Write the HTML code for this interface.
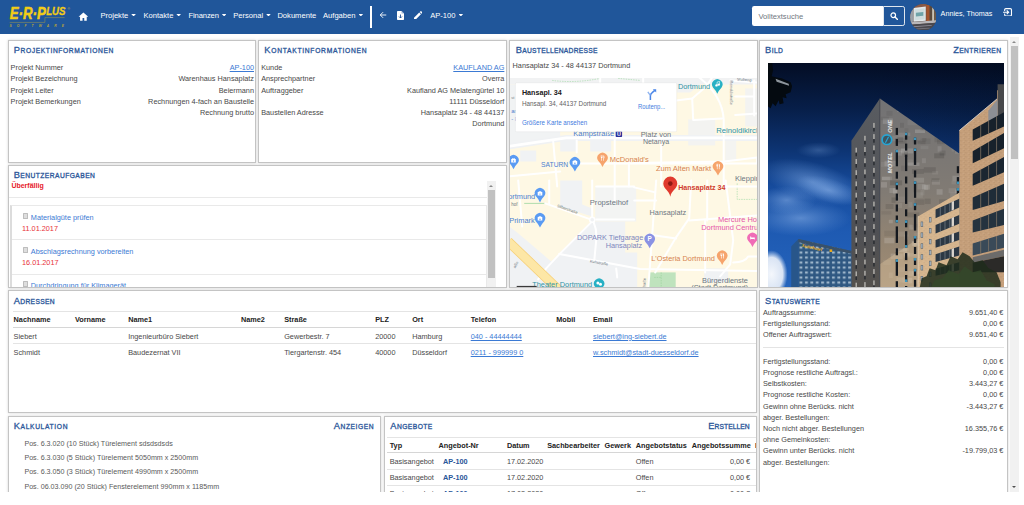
<!DOCTYPE html>
<html lang="de"><head><meta charset="utf-8"><title>ERPlus</title>
<style>
html,body{margin:0;padding:0}
body{width:1024px;height:505px;overflow:hidden;background:#fff;position:relative;font-family:"Liberation Sans",sans-serif;font-size:7.3px;color:#484848;line-height:11.2px}
*{box-sizing:border-box}
a{color:#3b7ad4;text-decoration:underline}
#nav{position:absolute;left:0;top:0;width:1024px;height:33.7px;background:#20569a}
#nav .t{position:absolute;top:11.300px;color:#fff;font-size:7.6px;line-height:10px;white-space:nowrap}
.car{display:inline-block;width:4.600px;height:2.500px;background:#fff;clip-path:polygon(0 0,100% 0,50% 100%);vertical-align:1.900px;margin-left:3px}
.p{position:absolute;background:#fff;border:1px solid #c4c4c4;box-shadow:0 0 2.5px rgba(0,0,0,.17);overflow:hidden}
.h{position:absolute;left:4.700px;top:2.600px;font-size:6.700px;line-height:13px;text-transform:uppercase;color:#2a5699;letter-spacing:.6px;white-space:nowrap;-webkit-text-stroke:.3px #2a5699}
.h i{font-style:normal;font-size:9.300px}
.hr{left:auto;right:4.600px}
.r{position:absolute;left:1.6px;right:1px;margin-top:-.9px;height:11.2px;white-space:nowrap}
.r b{font-weight:normal;position:absolute;right:0;top:0}

.cb{position:absolute;left:13.600px;margin-top:-.3px;width:5.600px;height:5.600px;border:.6px solid #bdbdbd;background:#dedede;border-radius:.6px}
.ti{position:absolute;left:21.800px;height:11px;line-height:11px;white-space:nowrap}
.ti a{text-decoration:none;color:#3b7ad4}
.dt{position:absolute;left:13px;height:11px;line-height:11px;color:#e8323a;white-space:nowrap}
.sep{position:absolute;left:0;height:.6px;background:#e9e9e9}

.c{position:absolute;white-space:nowrap;height:11px;line-height:11px}
.th{font-weight:bold;color:#222}
.ln{position:absolute;height:.6px;background:#e4e4e4}
.w{position:absolute}
</style></head><body>
<div id="nav">
<svg style="position:absolute;left:0;top:0" width="76" height="34" viewBox="0 0 76 34"><g font-family="Liberation Sans,sans-serif" font-weight="bold" font-style="italic" fill="#f3cd16"><text x="9.800" y="18.9" font-size="16.6" textLength="36" lengthAdjust="spacingAndGlyphs" stroke="#f3cd16" stroke-width=".55">E·R·P</text><text x="46.2" y="14.5" font-size="10.5" textLength="19.2" lengthAdjust="spacingAndGlyphs" stroke="#f3cd16" stroke-width=".3">LUS</text><text x="67.6" y="9.6" font-size="3.4" font-style="normal" font-weight="normal" fill="#c8b13a">®</text><text x="9.4" y="26.9" font-size="3.3" fill="#b9a437" textLength="54.6" lengthAdjust="spacing">SOFTWARE</text></g><path d="M9.7 22.4H44.9V17.6H64.6" stroke="#b5a23c" stroke-width=".45" fill="none"/></svg>
<svg style="position:absolute;left:77.6px;top:11.8px" width="10.8" height="9.2" viewBox="0 0 24 22"><path d="M12 1 L0.5 11.5 H4 V21 H10 V14.5 H14 V21 H20 V11.5 H23.5 Z" fill="#fff"/></svg>
<span class="t" style="left:100.4px">Projekte<span class="car"></span></span>
<span class="t" style="left:143.4px">Kontakte<span class="car"></span></span>
<span class="t" style="left:188.4px;letter-spacing:-.1px">Finanzen<span class="car"></span></span>
<span class="t" style="left:233.2px">Personal<span class="car"></span></span>
<span class="t" style="left:277.4px">Dokumente</span>
<span class="t" style="left:323px">Aufgaben<span class="car"></span></span>
<div style="position:absolute;left:370.3px;top:6px;width:1.3px;height:22px;background:#fff"></div>
<svg style="position:absolute;left:379.4px;top:11.4px" width="8" height="8" viewBox="0 0 16 16"><path d="M14.500 8H2.500M8.200 2.300L2.500 8L8.200 13.700" stroke="#fff" stroke-width="1.800" fill="none"/></svg>
<svg style="position:absolute;left:397px;top:10.6px" width="7" height="9" viewBox="0 0 14 18"><path d="M0 1.5A1.5 1.5 0 0 1 1.500 0H9l5 5v11.500A1.500 1.500 0 0 1 12.500 18h-11A1.500 1.500 0 0 1 0 16.500z" fill="#fff"/><path d="M7 7v7M4 11l3 3 3-3" stroke="#20569a" stroke-width="1.800" fill="none"/><path d="M9 0v5h5z" fill="#9db6d6"/></svg>
<svg style="position:absolute;left:413.600px;top:10.800px" width="8.500" height="8.500" viewBox="0 0 16 16"><path d="M0 12.700V16h3.300l9.800-9.800-3.300-3.300zM15.700 3.600a.9.900 0 0 0 0-1.300L13.700.3a.9.900 0 0 0-1.300 0l-1.600 1.600 3.300 3.300z" fill="#fff"/></svg>
<span class="t" style="left:430.200px">AP-100<span class="car"></span></span>
<div style="position:absolute;left:752.400px;top:6px;width:131px;height:20px;background:#fff;border-radius:2.200px 0 0 2.200px"></div>
<span style="position:absolute;left:758.400px;top:11.800px;font-size:7.600px;line-height:10px;color:#6f7780">Volltextsuche</span>
<div style="position:absolute;left:883.400px;top:6px;width:21.400px;height:20px;border:.6px solid #dfe6ee;border-radius:0 2.200px 2.200px 0"></div>
<svg style="position:absolute;left:889.600px;top:11.600px" width="8" height="8" viewBox="0 0 16 16"><circle cx="6.500" cy="6.500" r="4.600" stroke="#fff" stroke-width="2.400" fill="none"/><path d="M10 10l5 5" stroke="#fff" stroke-width="2.800" stroke-linecap="round"/></svg>
<svg style="position:absolute;left:909.700px;top:3.700px" width="26.600" height="26.600" viewBox="0 0 27 27"><defs><clipPath id="av"><circle cx="13.500" cy="13.500" r="13.400"/></clipPath></defs><g clip-path="url(#av)"><rect width="27" height="27" fill="#5b4a44"/><rect x="0" y="0" width="17" height="5" fill="#8a5a48"/><path d="M0 6L3 5V18L0 19Z" fill="#9aa0a8"/><path d="M3.500 4L16 2.500V17L3.500 18Z" fill="#e4e9eb"/><path d="M4.500 5.500L14.800 4.200V15.500L4.500 16.400Z" fill="#cfdcde"/><path d="M6 9L13.500 8.200V12L6 12.600Z" fill="#6fa3a8"/><rect x="16.500" y="1" width="3.500" height="18" fill="#a5562f"/><rect x="20" y="1" width="2.500" height="18" fill="#5a4a3c"/><rect x="22.500" y="3" width="2" height="15" fill="#c9c3b4"/><rect x="24.500" y="1" width="3" height="18" fill="#6b5a4a"/><path d="M0 18.500L27 16.500V19L0 21Z" fill="#b9b6b8"/><path d="M0 21L27 19V27H0Z" fill="#4a484e"/><path d="M3 22.600L22 21.200V22.200L3 23.600Z" fill="#8f8c96"/><path d="M6 25L20 24V24.800L6 25.800Z" fill="#77757e"/></g></svg>
<span class="t" style="left:940.600px;top:8.900px;font-size:7.200px">Annies, Thomas</span>
<svg style="position:absolute;left:1003.400px;top:7.900px" width="9.200" height="8.600" viewBox="0 0 18 17"><rect x="3.200" y="1.300" width="13.500" height="14.400" rx="2.400" stroke="#fff" stroke-width="2.200" fill="none"/><path d="M0 8.500h10.500" stroke="#20569a" stroke-width="5"/><path d="M0 8.500h10.500M7.300 4.700l3.800 3.800-3.800 3.800" stroke="#fff" stroke-width="2.200" fill="none"/></svg>
</div>
<div class="p" id="p1" style="left:8px;top:40px;width:248px;height:123px"><div class="w" style="left:0.00px;top:0.00px;width:246.00px;height:121.00px"><div class="h" style="letter-spacing:0.60px"><i>P</i>rojektinformationen</div><div class="r" style="top:22.0px">Projekt Nummer<b><a>AP-100</a></b></div><div class="r" style="top:33.2px">Projekt Bezeichnung<b>Warenhaus Hansaplatz</b></div><div class="r" style="top:44.4px">Projekt Leiter<b>Beiermann</b></div><div class="r" style="top:55.6px">Projekt Bemerkungen<b>Rechnungen 4-fach an Baustelle</b></div><div class="r" style="top:66.8px"><b>Rechnung brutto</b></div></div></div>
<div class="p" id="p2" style="left:258px;top:40px;width:249px;height:123px"><div class="w" style="left:0.59px;top:0.00px;width:245.80px;height:121.00px"><div class="h" style="letter-spacing:0.73px"><i>K</i>ontaktinformationen</div><div class="r" style="top:22.0px">Kunde<b><a>KAUFLAND AG</a></b></div><div class="r" style="top:33.2px">Ansprechpartner<b>Overra</b></div><div class="r" style="top:44.4px">Auftraggeber<b>Kaufland AG Melatengürtel 10</b></div><div class="r" style="top:55.6px"><b>11111 Düsseldorf</b></div><div class="r" style="top:66.8px">Baustellen Adresse<b>Hansaplatz 34 - 48 44137</b></div><div class="r" style="top:78.0px"><b>Dortmund</b></div></div></div>
<div class="p" id="p3" style="left:509px;top:40px;width:249px;height:248px"><div class="w" style="left:1.00px;top:0.00px;width:245.59px;height:246.59px"><div class="h" style="letter-spacing:0.29px"><i>B</i>austellenadresse</div><div class="r" style="top:19.600px;left:1.600px">Hansaplatz 34 - 48 44137 Dortmund</div><svg id="map" style="position:absolute;left:-1px;top:36.600px" width="247.200" height="211" viewBox="509.800 77.600 247.200 211" font-family="Liberation Sans,sans-serif" font-size="6.5">
<rect x="508" y="77" width="250" height="213" fill="#fef8e4"/>
<path d="M508 77H757V84H700L690 92H677V84H508Z" fill="#f1f2f3"/>
<path d="M508 84H560V140L508 147Z" fill="#f1f3f4"/>
<path d="M509 226L517 232L551 261L592 221H625V252H637V289H509Z" fill="#f0f2f4"/>
<path d="M595 186H636V221H595Z" fill="#f3f4f3"/>
<path d="M560 180H582V204L592 208V216L560 206Z" fill="#f0f2f4"/>
<path d="M688 119H715V145H688Z" fill="#f3f3f1"/>
<path d="M745 88H757V126H745Z" fill="#f3f3f1"/>
<path d="M725 140H736V160H725Z" fill="#f4f4f1"/>
<path d="M560 140H576V151H560ZM590 140H611V151H590ZM520 150H536V161H520Z" fill="#f0f2f4"/>
<path d="M704 268H728V282H704Z" fill="#f0f2f4"/>

<path d="M508 146L566 137.500H757" stroke="#f0f2f4" stroke-width="6" fill="none"/>
<rect x="648.800" y="272" width="26.700" height="17" fill="#bfe3bd"/>
<path d="M661 272V289M654 277H661" stroke="#8fcf92" stroke-width=".5" stroke-dasharray="1.500 1" fill="none"/>
<path d="M737 183V199H757" stroke="#9ad6a0" stroke-width=".6" stroke-dasharray="1.500 1" fill="none"/>
<path d="M552 80Q575 83 600 78M618 78L640 80" stroke="#9ad6a0" stroke-width=".6" stroke-dasharray="1.500 1" fill="none"/>
<path d="M524 203H545" stroke="#9ad6a0" stroke-width=".8" fill="none"/>
<g stroke="#fff" stroke-width="2" fill="none" stroke-linecap="round" stroke-linejoin="round">
<path d="M508 146L566 137.500H757" stroke-width="2.600"/>
<path d="M553 141L557 186"/><path d="M576.500 140V152"/><path d="M580 163H757L757 158"/>
<path d="M634 162.500L724 161L757 157"/>
<path d="M508 176L560 171"/><path d="M614.500 136V200"/><path d="M628.700 160V186"/><path d="M661 140V186"/>
<path d="M676 100L692 98L706 86L712 77"/><path d="M692 98L693 119.500L722 118"/>
<path d="M699 77Q722 95 723.500 119V186"/>
<path d="M730 80L757 82"/><path d="M754 80V115"/><path d="M735 96H754"/><path d="M735 114.500L757 113"/>
<path d="M600 78V84M643 78V84"/>
<path d="M545 203L589 218.500"/><path d="M591 222L560 253L546 268L538 279"/><path d="M593.500 222Q597 230 596 240L594 261"/>
<path d="M559 253.500L640 268.500L757 270.500"/><path d="M549 180V203"/><path d="M518 180L522 226"/>
<path d="M592 180V216"/><path d="M596 219H634"/><path d="M616 268L617 277"/>
<path d="M596 186H634"/>
<path d="M656 180L648 289"/><path d="M691 180L689 218L675.500 237.500L655 272"/>
<path d="M689 220L757 215"/><path d="M705 220V272"/><path d="M707 180V220"/>
<path d="M725.500 180L733 240L730 264L720 276"/><path d="M648 234L676 238"/>
<path d="M634 187L655 192"/><path d="M724 186H757"/><path d="M733 262Q745 262 748 256H757"/>
<path d="M634 200H656"/>
</g>
<circle cx="592" cy="219.300" r="3.200" fill="#fff"/><circle cx="592" cy="219.300" r="1.800" fill="#f0f2f4"/>
<path d="M508 241L558 289" stroke="#f6cf77" stroke-width="9.500" fill="none"/>
<path d="M508 241L558 289" stroke="#fde7a6" stroke-width="8" fill="none"/>
<g fill="#6d7782">
<text x="640.500" y="136.600" textLength="30.5" lengthAdjust="spacingAndGlyphs">Platz von</text><text x="642.700" y="143.600" textLength="26.2" lengthAdjust="spacingAndGlyphs">Netanya</text>
<text x="589.600" y="204.600" font-size="6.800" textLength="38.4" lengthAdjust="spacingAndGlyphs">Propsteihof</text>
<text x="649.400" y="214.400" font-size="6.800" textLength="36.600" lengthAdjust="spacingAndGlyphs">Hansaplatz</text>
<text x="701.800" y="282.400" font-size="6.800" textLength="46.0" lengthAdjust="spacingAndGlyphs">Bürgerdienste</text><text x="691" y="290" font-size="6.800" textLength="57.0" lengthAdjust="spacingAndGlyphs">(Stadt Dortmund)</text>
<text x="734.700" y="180.600" font-size="6.800" textLength="25.0" lengthAdjust="spacingAndGlyphs">Kleppin</text>
<text font-size="4" transform="translate(556.500 206.500) rotate(19)">Silberstraße</text>
<text font-size="4" transform="translate(589.500 262) rotate(10)">Kuhstraße</text>
<text font-size="4" transform="translate(736.500 80) rotate(4)">Stubeng</text>
<text font-size="3.800" transform="translate(729.500 80) rotate(90)">Reinoldistraße</text>
<text font-size="4" transform="translate(645 289) rotate(-86)">straße</text>
<text font-size="4" transform="translate(515 268) rotate(-60)">aße</text>
<text font-size="4" x="511" y="99">st</text><text font-size="4.500" x="511" y="205.500">hof</text>
</g>
<g fill="#2f93a5"><text x="677.800" y="88.300" font-size="7.300" textLength="32.2" lengthAdjust="spacingAndGlyphs">Dortmund</text><text x="716" y="132.400" font-size="7.100" textLength="44.0" lengthAdjust="spacingAndGlyphs">Reinoldikirch</text><text x="532" y="287" font-size="7.200" textLength="60.0" lengthAdjust="spacingAndGlyphs">Theater Dortmund</text></g>
<g fill="#4c7fd0"><text x="573" y="135.500" font-size="6.800" textLength="41.0" lengthAdjust="spacingAndGlyphs">Kampstraße</text><text x="540.900" y="166.500" font-size="6.800" textLength="27.1" lengthAdjust="spacingAndGlyphs">SATURN</text><text x="508" y="198.300" font-size="6.800" textLength="27.0" lengthAdjust="spacingAndGlyphs">ortmund</text><text x="509" y="222.800" font-size="6.800" textLength="25.5" lengthAdjust="spacingAndGlyphs">Primark</text><text x="511" y="113" font-size="6">ar</text><text x="511" y="121" font-size="6">- E</text></g>
<g fill="#d6834f"><text x="609.600" y="161.800" font-size="6.800" textLength="39.0" lengthAdjust="spacingAndGlyphs">McDonald's</text><text x="655.800" y="170.600" font-size="6.800" textLength="55.1" lengthAdjust="spacingAndGlyphs">Zum Alten Markt</text><text x="651" y="260.300" font-size="6.800" textLength="63.7" lengthAdjust="spacingAndGlyphs">L'Osteria Dortmund</text></g>
<g fill="#e556a8"><text x="717.800" y="222" font-size="6.800" textLength="39.0" lengthAdjust="spacingAndGlyphs">Mercure Ho</text><text x="701" y="229.700" font-size="6.800" textLength="57.0" lengthAdjust="spacingAndGlyphs">Dortmund Centru</text></g>
<g fill="#7d86bd"><text x="576.700" y="239.800" font-size="6.800" textLength="66.3" lengthAdjust="spacingAndGlyphs">DOPARK Tiefgarage</text><text x="605.500" y="247.300" font-size="6.800" textLength="36.600" lengthAdjust="spacingAndGlyphs">Hansaplatz</text></g>
<text x="678" y="189.600" font-size="6.700" font-weight="bold" fill="#cf3b2e" textLength="47.2" lengthAdjust="spacingAndGlyphs">Hansaplatz 34</text>
<g fill="#5a9bf3"><path transform="translate(513.300 159.700)" d="M-4.300 2.900Q-1.300 6 0 9.200Q1.300 6 4.300 2.900A5.200 5.200 0 1 0-4.300 2.900Z"/><path transform="translate(574.700 161.900)" d="M-4.300 2.900Q-1.300 6 0 9.200Q1.300 6 4.300 2.900A5.200 5.200 0 1 0-4.300 2.900Z"/><path transform="translate(539.800 192.800)" d="M-4.300 2.900Q-1.300 6 0 9.200Q1.300 6 4.300 2.900A5.200 5.200 0 1 0-4.300 2.900Z"/><path transform="translate(539.800 217.900)" d="M-4.300 2.900Q-1.300 6 0 9.200Q1.300 6 4.300 2.900A5.200 5.200 0 1 0-4.300 2.900Z"/></g>
<g fill="#f6a46c"><path transform="translate(602.300 157.500)" d="M-4.300 2.900Q-1.300 6 0 9.200Q1.300 6 4.300 2.900A5.200 5.200 0 1 0-4.300 2.900Z"/><path transform="translate(717.800 166)" d="M-4.300 2.900Q-1.300 6 0 9.200Q1.300 6 4.300 2.900A5.200 5.200 0 1 0-4.300 2.900Z"/><path transform="translate(722 255.400)" d="M-4.300 2.900Q-1.300 6 0 9.200Q1.300 6 4.300 2.900A5.200 5.200 0 1 0-4.300 2.900Z"/></g>
<path transform="translate(717.100 84.100)" d="M-4.300 2.900Q-1.300 6 0 9.200Q1.300 6 4.300 2.900A5.200 5.200 0 1 0-4.300 2.900Z" fill="#27b0c4"/><path transform="translate(598.900 283.200)" d="M-4.300 2.900Q-1.300 6 0 9.200Q1.300 6 4.300 2.900A5.200 5.200 0 1 0-4.300 2.900Z" fill="#27b0c4"/>
<path transform="translate(752.300 237.500)" d="M-4.300 2.900Q-1.300 6 0 9.200Q1.300 6 4.300 2.900A5.200 5.200 0 1 0-4.300 2.900Z" fill="#f06cb6"/><path transform="translate(649.500 238.600)" d="M-4.300 2.900Q-1.300 6 0 9.200Q1.300 6 4.300 2.900A5.200 5.200 0 1 0-4.300 2.900Z" fill="#8a92e4"/>
<g fill="#fff"><path d="M-2.300-1.200H2.300V2.300H-2.300ZM-1.200-1.200V-2.200H1.200V-1.200H.6V-1.700H-.6V-1.200Z" transform="translate(513.300 159.700)"/><path d="M-2.300-1.200H2.300V2.300H-2.300ZM-1.200-1.200V-2.200H1.200V-1.200H.6V-1.700H-.6V-1.200Z" transform="translate(574.7 161.9)"/><path d="M-2.300-1.200H2.300V2.300H-2.300ZM-1.200-1.200V-2.200H1.200V-1.200H.6V-1.700H-.6V-1.200Z" transform="translate(539.8 192.8)"/><path d="M-2.300-1.200H2.300V2.300H-2.300ZM-1.200-1.200V-2.200H1.200V-1.200H.6V-1.700H-.6V-1.200Z" transform="translate(539.8 217.9)"/>
<path d="M-1.700-2.600V-.6Q-1.700 0-1.100 .1V2.800H-.5V.1Q.1 0 .1-.6V-2.600H-.3V-.8H-.6V-2.600H-1V-.8H-1.300V-2.600ZM.9-2.600Q1.900-2.400 1.900-.6V.4H1.500V2.800H.9Z" transform="translate(602.300 157.500)"/><path d="M-1.700-2.600V-.6Q-1.700 0-1.100 .1V2.800H-.5V.1Q.1 0 .1-.6V-2.600H-.3V-.8H-.6V-2.600H-1V-.8H-1.300V-2.600ZM.9-2.600Q1.900-2.400 1.900-.6V.4H1.500V2.800H.9Z" transform="translate(717.8 166.0)"/><path d="M-1.700-2.600V-.6Q-1.700 0-1.100 .1V2.800H-.5V.1Q.1 0 .1-.6V-2.600H-.3V-.8H-.6V-2.600H-1V-.8H-1.300V-2.600ZM.9-2.600Q1.900-2.400 1.900-.6V.4H1.500V2.800H.9Z" transform="translate(722.0 255.4)"/>
<circle cx="716.300" cy="85" r="1.200"/><circle cx="718.600" cy="84.200" r="1.200"/><path d="M716.900 85V81.700L719.400 81V84.200" stroke="#fff" stroke-width=".6" fill="none"/>
<circle cx="597.700" cy="282.600" r="1.500"/><circle cx="600.300" cy="283.800" r="1.500"/>
<path d="M750 239.200V236.200H751V237H754.600V239.200H754V238.500H750.600V239.200Z"/></g>
<circle cx="574.700" cy="162.800" r=".7" fill="#5a9bf3"/><circle cx="513.300" cy="160.600" r=".7" fill="#5a9bf3"/><circle cx="539.800" cy="193.700" r=".7" fill="#5a9bf3"/><circle cx="539.800" cy="218.800" r=".7" fill="#5a9bf3"/>
<text x="647.300" y="241" font-size="6.400" font-weight="bold" fill="#fff">P</text>
<rect x="615.500" y="130.200" width="6.400" height="6.400" rx=".8" fill="#2a2f9a"/><text x="616.900" y="135.600" font-size="5.400" font-weight="bold" fill="#fff">U</text>
<path d="M670.100 196.300C669.200 190.500 663.100 188.500 663.100 183.200A7 7 0 0 1 677.100 183.200C677.100 188.500 671 190.500 670.100 196.300Z" fill="#e03a2e"/><circle cx="670.100" cy="183.200" r="2.300" fill="#8e1912"/>
<rect x="516.500" y="285.500" width="20" height="3.500" fill="#3a3a3a"/>
<rect x="515.200" y="82.400" width="161.300" height="48.900" fill="#fff" rx="1"/>
<rect x="515.200" y="82.400" width="161.300" height="48.900" fill="none" stroke="rgba(0,0,0,.08)" stroke-width=".6" rx="1"/>
<text x="521.700" y="94.600" font-size="7.500" font-weight="bold" fill="#202020" textLength="39.8" lengthAdjust="spacingAndGlyphs">Hansapl. 34</text>
<text x="521.700" y="105.900" font-size="6.300" fill="#5f5f5f" textLength="84.5" lengthAdjust="spacingAndGlyphs">Hansapl. 34, 44137 Dortmund</text>
<text x="521.700" y="124.500" font-size="6.300" fill="#3f7de0" textLength="65.3" lengthAdjust="spacingAndGlyphs">Größere Karte ansehen</text>
<text x="637.700" y="108.800" font-size="6.300" fill="#3f7de0" textLength="27.3" lengthAdjust="spacingAndGlyphs">Routenp...</text>
<path d="M650.200 99.500V95.500Q650.200 93.500 652 92.200L654.600 90" stroke="#4a86e8" stroke-width="1.500" fill="none"/><path d="M652.600 88.800H656V92.200Z" fill="#4a86e8"/><path d="M650.200 95L647.600 91.500" stroke="#8fb4f0" stroke-width="1.400" fill="none"/>
</svg>
</div></div>
<div class="p" id="p4" style="left:759px;top:40px;width:249px;height:248px"><div class="w" style="left:1.19px;top:0.00px;width:245.59px;height:246.59px"><div class="h" style="margin-left:-.8px;letter-spacing:0.40px"><i>B</i>ild</div><div class="h hr" style="letter-spacing:0.40px;right:5.30px"><i>Z</i>entrieren</div><svg id="photo" style="position:absolute;left:6.4px;top:22px" width="236.4" height="224" viewBox="767.4 62.8 236.4 224">
<defs>
<linearGradient id="sky" gradientUnits="userSpaceOnUse" x1="0" y1="62.8" x2="0" y2="286.8"><stop offset="0" stop-color="#030d24"/><stop offset=".21" stop-color="#071f4a"/><stop offset=".39" stop-color="#0d3473"/><stop offset=".55" stop-color="#164b9c"/><stop offset=".75" stop-color="#1e5ab2"/><stop offset="1" stop-color="#2564bc"/></linearGradient>
<linearGradient id="skyr" gradientUnits="userSpaceOnUse" x1="860" y1="0" x2="1004" y2="0"><stop offset="0" stop-color="#01040c" stop-opacity="0"/><stop offset="1" stop-color="#01040c" stop-opacity=".18"/></linearGradient>
<linearGradient id="tl" x1="0" y1="0" x2="0" y2="1"><stop offset="0" stop-color="#595c61"/><stop offset=".7" stop-color="#4f5054"/><stop offset="1" stop-color="#55524e"/></linearGradient>
<linearGradient id="tr" x1="0" y1="0" x2="0" y2="1"><stop offset="0" stop-color="#727274"/><stop offset=".5" stop-color="#817b74"/><stop offset=".8" stop-color="#968672"/><stop offset="1" stop-color="#a18e77"/></linearGradient>
<radialGradient id="cl1"><stop offset="0" stop-color="#8db4ea" stop-opacity=".55"/><stop offset="1" stop-color="#6f9fe0" stop-opacity="0"/></radialGradient>
<radialGradient id="cl2"><stop offset="0" stop-color="#f4f7fc"/><stop offset=".7" stop-color="#e3ebf7" stop-opacity=".95"/><stop offset="1" stop-color="#c6d8f2" stop-opacity="0"/></radialGradient>
<pattern id="gw" x="798" y="240" width="5.4" height="5" patternUnits="userSpaceOnUse"><rect x="1" y="1.4" width="2.800" height="2" fill="#cfe0ec" fill-opacity=".75"/></pattern>
<pattern id="sp" width="5" height="4" patternUnits="userSpaceOnUse"><rect x=".5" y=".6" width=".9" height=".6" fill="#6b4a34" fill-opacity=".45"/><rect x="3" y="2.4" width=".9" height=".6" fill="#6b4a34" fill-opacity=".4"/><rect x="2" y="1.2" width=".8" height=".5" fill="#fff" fill-opacity=".25"/><rect x="4" y=".2" width=".7" height=".5" fill="#5a3c2a" fill-opacity=".3"/></pattern>
<clipPath id="cr"><path d="M879.3 98.300L958.7 153.200V288H879.300Z"/></clipPath>
</defs>
<rect x="767" y="62" width="238" height="226" fill="url(#sky)"/><rect x="767" y="62" width="238" height="226" fill="url(#skyr)"/>
<ellipse cx="812" cy="182" rx="52" ry="20" fill="url(#cl1)" transform="rotate(16 812 182)"/><ellipse cx="828" cy="190" rx="34" ry="12" fill="url(#cl1)" transform="rotate(16 828 190)"/><ellipse cx="800" cy="218" rx="50" ry="18" fill="url(#cl1)"/><ellipse cx="786" cy="200" rx="30" ry="14" fill="url(#cl1)"/><ellipse cx="818" cy="150" rx="22" ry="8" fill="url(#cl1)" opacity=".5"/>
<ellipse cx="771" cy="274" rx="16" ry="24" fill="url(#cl2)"/>
<path d="M767 62H771.500L772.500 70L771 76L775 77L781 78L790 82L791.500 86L790 92L785 94L786 98L782 97L783 103L779 104L778 100L775 106L772 103L770 108L767 106Z" fill="#040a10"/><path d="M775 78.500L788 83.500L788.500 85.500L776 81.500Z" fill="#8d959c"/>
<path d="M790.600 246.400L797.800 238.800V288H790.600Z" fill="#28568a"/><path d="M797.800 238.800L851 250.800V288H797.800Z" fill="#2f5882"/><path d="M797.800 238.800L851 250.800V288H797.800Z" fill="url(#gw)"/><path d="M797.800 238.800L851 250.800V253.500L797.800 242Z" fill="#39516a"/>
<text x="801" y="246.600" font-family="Liberation Serif,serif" font-style="italic" font-weight="bold" font-size="5" fill="#f0b21a" transform="rotate(12.700 801 246.600)">Suitehotel</text><rect x="829" y="249.200" width="2.600" height="2.600" fill="#e8a81c"/>
<path d="M879.300 98.300L850.800 140.500V288H879.300Z" fill="url(#tl)"/><path d="M879.300 98.300L958.700 153.200V288H879.300Z" fill="url(#tr)"/>
<g clip-path="url(#cr)"><rect x="903.9" y="128.1" width="4" height="3.5" fill="#000" fill-opacity="0.05"/><rect x="923.9" y="269.2" width="6" height="3.5" fill="#fff" fill-opacity="0.10"/><rect x="897.5" y="202.5" width="4" height="5.5" fill="#fff" fill-opacity="0.07"/><rect x="927.3" y="276.3" width="12" height="5.5" fill="#fff" fill-opacity="0.16"/><rect x="882.6" y="259.7" width="8" height="5" fill="#fff" fill-opacity="0.06"/><rect x="902.8" y="251.8" width="6" height="3.5" fill="#fff" fill-opacity="0.12"/><rect x="907.7" y="201.9" width="4" height="5.5" fill="#fff" fill-opacity="0.07"/><rect x="931.4" y="179.5" width="8" height="5" fill="#fff" fill-opacity="0.10"/><rect x="902.1" y="247.8" width="6" height="3.5" fill="#fff" fill-opacity="0.11"/><rect x="946.4" y="235.7" width="8" height="5.5" fill="#000" fill-opacity="0.05"/><rect x="911.2" y="240.8" width="6" height="5" fill="#fff" fill-opacity="0.16"/><rect x="885" y="203.8" width="8" height="5" fill="#000" fill-opacity="0.09"/><rect x="923.7" y="184.9" width="4" height="5" fill="#fff" fill-opacity="0.12"/><rect x="883.7" y="230.5" width="12" height="5.5" fill="#000" fill-opacity="0.06"/><rect x="908.7" y="224.4" width="4" height="5" fill="#fff" fill-opacity="0.12"/><rect x="917" y="140.6" width="8" height="3.5" fill="#000" fill-opacity="0.07"/><rect x="949.6" y="192.4" width="6" height="5" fill="#fff" fill-opacity="0.08"/><rect x="889.5" y="180.1" width="12" height="5" fill="#000" fill-opacity="0.12"/><rect x="931.6" y="170.8" width="6" height="3.5" fill="#fff" fill-opacity="0.07"/><rect x="929.7" y="102.2" width="12" height="3.5" fill="#fff" fill-opacity="0.05"/><rect x="911.3" y="168.7" width="12" height="5" fill="#000" fill-opacity="0.10"/><rect x="918.7" y="214.9" width="4" height="5" fill="#000" fill-opacity="0.10"/><rect x="946.3" y="248.4" width="10" height="5" fill="#fff" fill-opacity="0.06"/><rect x="927.8" y="111.6" width="4" height="3.5" fill="#fff" fill-opacity="0.06"/><rect x="925.3" y="119" width="12" height="3.5" fill="#fff" fill-opacity="0.15"/><rect x="926.3" y="113.1" width="6" height="5.5" fill="#fff" fill-opacity="0.12"/><rect x="952.6" y="212" width="10" height="3.5" fill="#fff" fill-opacity="0.10"/><rect x="954.3" y="189.4" width="8" height="3.5" fill="#fff" fill-opacity="0.13"/><rect x="936" y="189" width="6" height="5.5" fill="#fff" fill-opacity="0.15"/><rect x="919.7" y="127.3" width="12" height="3.5" fill="#000" fill-opacity="0.06"/><rect x="928.5" y="116.9" width="8" height="5.5" fill="#fff" fill-opacity="0.07"/><rect x="938.4" y="199.1" width="12" height="5" fill="#000" fill-opacity="0.09"/><rect x="939.7" y="241" width="6" height="3.5" fill="#000" fill-opacity="0.10"/><rect x="896.5" y="196.3" width="8" height="5.5" fill="#fff" fill-opacity="0.05"/><rect x="900.5" y="148.2" width="12" height="5" fill="#fff" fill-opacity="0.15"/><rect x="955.1" y="277.6" width="8" height="3.5" fill="#fff" fill-opacity="0.07"/><rect x="894.1" y="138" width="12" height="5.5" fill="#000" fill-opacity="0.08"/><rect x="929.3" y="248.7" width="4" height="5.5" fill="#fff" fill-opacity="0.09"/><rect x="933.8" y="137.1" width="6" height="5" fill="#000" fill-opacity="0.07"/><rect x="940.7" y="280.7" width="10" height="5" fill="#fff" fill-opacity="0.15"/><rect x="934.8" y="131.6" width="6" height="3.5" fill="#fff" fill-opacity="0.15"/><rect x="941.1" y="127.2" width="12" height="5" fill="#000" fill-opacity="0.07"/><rect x="921.2" y="124.4" width="4" height="5.5" fill="#000" fill-opacity="0.08"/><rect x="950.9" y="180.7" width="6" height="3.5" fill="#fff" fill-opacity="0.07"/><rect x="917.6" y="242" width="8" height="5" fill="#fff" fill-opacity="0.14"/><rect x="883.7" y="237.6" width="10" height="5.5" fill="#fff" fill-opacity="0.15"/><rect x="911.4" y="270.7" width="12" height="3.5" fill="#fff" fill-opacity="0.11"/><rect x="880.4" y="181.9" width="6" height="5.5" fill="#fff" fill-opacity="0.14"/><rect x="892.3" y="188.1" width="4" height="5.5" fill="#fff" fill-opacity="0.13"/><rect x="919.9" y="189.7" width="4" height="5.5" fill="#fff" fill-opacity="0.07"/><rect x="882.2" y="118.2" width="10" height="5.5" fill="#fff" fill-opacity="0.15"/><rect x="883.9" y="160.6" width="12" height="5.5" fill="#fff" fill-opacity="0.13"/><rect x="913.8" y="199.2" width="10" height="5.5" fill="#000" fill-opacity="0.10"/><rect x="946.5" y="275.2" width="8" height="5.5" fill="#000" fill-opacity="0.06"/><rect x="913.5" y="177.5" width="10" height="5" fill="#fff" fill-opacity="0.12"/><rect x="912" y="139.6" width="8" height="3.5" fill="#000" fill-opacity="0.05"/><rect x="934.1" y="222.8" width="6" height="5" fill="#000" fill-opacity="0.12"/><rect x="895.9" y="277.2" width="10" height="5" fill="#fff" fill-opacity="0.12"/><rect x="896.2" y="231.4" width="12" height="5" fill="#fff" fill-opacity="0.07"/><rect x="903.5" y="234.3" width="4" height="5" fill="#fff" fill-opacity="0.10"/><rect x="880.4" y="161.7" width="12" height="5" fill="#fff" fill-opacity="0.06"/><rect x="954.9" y="246.6" width="4" height="3.5" fill="#fff" fill-opacity="0.05"/><rect x="939" y="150.3" width="6" height="5" fill="#000" fill-opacity="0.09"/><rect x="951.8" y="175.5" width="12" height="5.5" fill="#fff" fill-opacity="0.13"/><rect x="885.9" y="110.7" width="6" height="5" fill="#000" fill-opacity="0.06"/><rect x="880.3" y="116.5" width="8" height="3.5" fill="#000" fill-opacity="0.06"/><rect x="899.4" y="122.6" width="4" height="5" fill="#000" fill-opacity="0.07"/><rect x="949.5" y="215.6" width="4" height="5.5" fill="#000" fill-opacity="0.12"/><rect x="953.6" y="148.7" width="6" height="3.5" fill="#000" fill-opacity="0.09"/><rect x="919.9" y="138.3" width="10" height="5.5" fill="#000" fill-opacity="0.06"/><rect x="940.9" y="285" width="4" height="3.5" fill="#fff" fill-opacity="0.11"/><rect x="954.3" y="195.6" width="6" height="5" fill="#fff" fill-opacity="0.14"/><rect x="912.3" y="192.1" width="10" height="5.5" fill="#fff" fill-opacity="0.07"/><rect x="896.7" y="136.9" width="6" height="5" fill="#000" fill-opacity="0.12"/><rect x="943.4" y="102.7" width="8" height="5" fill="#fff" fill-opacity="0.06"/><rect x="943.8" y="261.9" width="8" height="5.5" fill="#fff" fill-opacity="0.08"/><rect x="914.4" y="129.3" width="10" height="3.5" fill="#fff" fill-opacity="0.16"/><rect x="953.9" y="201.8" width="6" height="3.5" fill="#000" fill-opacity="0.06"/><rect x="906.5" y="100.2" width="10" height="3.5" fill="#fff" fill-opacity="0.11"/><rect x="894.5" y="193.9" width="4" height="3.5" fill="#fff" fill-opacity="0.06"/><rect x="909.8" y="107.8" width="4" height="5" fill="#fff" fill-opacity="0.08"/><rect x="924.1" y="198.4" width="6" height="5.5" fill="#000" fill-opacity="0.10"/><rect x="924.9" y="242.2" width="10" height="3.5" fill="#fff" fill-opacity="0.12"/><rect x="890.1" y="253.4" width="12" height="5.5" fill="#fff" fill-opacity="0.13"/><rect x="917.9" y="269.2" width="12" height="5.5" fill="#000" fill-opacity="0.10"/><rect x="942.6" y="208.6" width="6" height="3.5" fill="#fff" fill-opacity="0.06"/><rect x="906.8" y="119.5" width="10" height="5.5" fill="#fff" fill-opacity="0.05"/><rect x="919.9" y="145.5" width="8" height="3.5" fill="#fff" fill-opacity="0.06"/><rect x="950.8" y="267" width="4" height="5.5" fill="#fff" fill-opacity="0.13"/><rect x="915.5" y="250.5" width="8" height="3.5" fill="#000" fill-opacity="0.06"/><rect x="936" y="281.5" width="10" height="5" fill="#fff" fill-opacity="0.15"/><rect x="901.1" y="108.7" width="6" height="3.5" fill="#fff" fill-opacity="0.09"/><rect x="929.2" y="228.9" width="12" height="5.5" fill="#fff" fill-opacity="0.10"/><rect x="916.4" y="280.9" width="4" height="5.5" fill="#fff" fill-opacity="0.10"/><rect x="933.6" y="153.1" width="10" height="5" fill="#000" fill-opacity="0.12"/><rect x="921.3" y="158" width="4" height="5" fill="#fff" fill-opacity="0.10"/><rect x="942.1" y="280.1" width="10" height="5" fill="#fff" fill-opacity="0.15"/><rect x="950.7" y="113.9" width="4" height="3.5" fill="#000" fill-opacity="0.06"/><rect x="906.7" y="212.2" width="12" height="5" fill="#000" fill-opacity="0.10"/><rect x="896.8" y="267" width="10" height="5" fill="#fff" fill-opacity="0.05"/><rect x="916.9" y="183.8" width="8" height="5.5" fill="#fff" fill-opacity="0.09"/><rect x="903.3" y="256.3" width="4" height="5" fill="#000" fill-opacity="0.11"/><rect x="888.2" y="272.3" width="4" height="5.5" fill="#fff" fill-opacity="0.09"/><rect x="909.3" y="285.8" width="12" height="3.5" fill="#fff" fill-opacity="0.10"/><rect x="900.2" y="109" width="4" height="3.5" fill="#000" fill-opacity="0.06"/><rect x="951" y="146.4" width="8" height="5" fill="#fff" fill-opacity="0.07"/><rect x="907.7" y="277.8" width="4" height="5.5" fill="#fff" fill-opacity="0.15"/><rect x="921.7" y="137.8" width="4" height="3.5" fill="#000" fill-opacity="0.07"/><rect x="926.3" y="125.8" width="8" height="5" fill="#fff" fill-opacity="0.15"/><rect x="888.8" y="187.8" width="8" height="5" fill="#fff" fill-opacity="0.13"/><rect x="954.2" y="148.4" width="6" height="5" fill="#fff" fill-opacity="0.12"/><rect x="888.2" y="219.6" width="4" height="3.5" fill="#fff" fill-opacity="0.14"/><rect x="921.4" y="184.3" width="8" height="5" fill="#fff" fill-opacity="0.11"/><rect x="897.8" y="132.5" width="12" height="3.5" fill="#fff" fill-opacity="0.09"/><rect x="941.3" y="137.6" width="4" height="5.5" fill="#000" fill-opacity="0.07"/><rect x="936.4" y="139.1" width="8" height="5" fill="#000" fill-opacity="0.08"/><rect x="923.2" y="167" width="12" height="5.5" fill="#000" fill-opacity="0.11"/><rect x="895.6" y="150.4" width="6" height="5" fill="#fff" fill-opacity="0.10"/><rect x="952.5" y="257.9" width="4" height="3.5" fill="#fff" fill-opacity="0.13"/><rect x="948" y="188" width="12" height="5" fill="#fff" fill-opacity="0.09"/><rect x="950.4" y="253.6" width="10" height="5" fill="#fff" fill-opacity="0.06"/><rect x="890.9" y="197.2" width="4" height="5.5" fill="#000" fill-opacity="0.11"/><rect x="947.9" y="115.8" width="4" height="3.5" fill="#000" fill-opacity="0.06"/><rect x="949.8" y="220.1" width="8" height="3.5" fill="#000" fill-opacity="0.08"/><rect x="912.7" y="242.1" width="4" height="3.5" fill="#fff" fill-opacity="0.15"/><rect x="893.8" y="148.5" width="12" height="3.5" fill="#fff" fill-opacity="0.08"/><rect x="914.5" y="278.4" width="6" height="5" fill="#fff" fill-opacity="0.11"/><rect x="881.3" y="176.6" width="8" height="3.5" fill="#fff" fill-opacity="0.10"/><rect x="930.9" y="178.1" width="8" height="3.5" fill="#000" fill-opacity="0.11"/><rect x="896.5" y="106.3" width="8" height="5.5" fill="#fff" fill-opacity="0.13"/><rect x="894.3" y="248.3" width="12" height="3.5" fill="#fff" fill-opacity="0.16"/><rect x="903" y="252.5" width="6" height="5" fill="#fff" fill-opacity="0.13"/><rect x="901.7" y="277.1" width="10" height="5.5" fill="#fff" fill-opacity="0.07"/><rect x="911.1" y="223.7" width="12" height="3.5" fill="#000" fill-opacity="0.04"/><rect x="880.8" y="210.9" width="10" height="3.5" fill="#000" fill-opacity="0.05"/><rect x="913.6" y="232.4" width="8" height="5.5" fill="#fff" fill-opacity="0.06"/><rect x="891.8" y="135.5" width="12" height="5.5" fill="#fff" fill-opacity="0.08"/><rect x="934.9" y="256.1" width="8" height="5" fill="#fff" fill-opacity="0.05"/><rect x="900.5" y="165.4" width="4" height="5.5" fill="#000" fill-opacity="0.06"/><rect x="906.5" y="252.8" width="10" height="3.5" fill="#fff" fill-opacity="0.10"/><rect x="907.7" y="271" width="6" height="5" fill="#fff" fill-opacity="0.15"/><rect x="881.3" y="176.4" width="10" height="3.5" fill="#fff" fill-opacity="0.10"/><rect x="940.9" y="111.5" width="6" height="5.5" fill="#fff" fill-opacity="0.12"/><rect x="906.9" y="162.3" width="12" height="3.5" fill="#fff" fill-opacity="0.13"/><rect x="903.4" y="151.3" width="4" height="5.5" fill="#000" fill-opacity="0.11"/><rect x="927.8" y="275.4" width="4" height="3.5" fill="#fff" fill-opacity="0.13"/><rect x="914.9" y="244.4" width="8" height="5" fill="#000" fill-opacity="0.05"/><rect x="917.2" y="101.6" width="8" height="5.5" fill="#000" fill-opacity="0.09"/><rect x="904.2" y="159.4" width="8" height="5.5" fill="#fff" fill-opacity="0.07"/><rect x="937" y="146" width="4" height="5.5" fill="#fff" fill-opacity="0.11"/><path d="M879.300 264L918 238V288H879.300Z" fill="#dcc09a" fill-opacity=".42"/></g>
<rect x="854.9" y="147.5" width="1.500" height="5" fill="#aeaca8"/><rect x="854.9" y="152.5" width="1.500" height="3.600" fill="#2a2d32"/><rect x="854.9" y="158.8" width="1.500" height="5" fill="#aeaca8"/><rect x="854.9" y="163.8" width="1.500" height="3.600" fill="#2a2d32"/><rect x="854.9" y="170" width="1.500" height="5" fill="#aeaca8"/><rect x="854.9" y="175" width="1.500" height="3.600" fill="#2a2d32"/><rect x="854.9" y="181.2" width="1.500" height="5" fill="#aeaca8"/><rect x="854.9" y="186.2" width="1.500" height="3.600" fill="#2a2d32"/><rect x="854.9" y="192.5" width="1.500" height="5" fill="#aeaca8"/><rect x="854.9" y="197.5" width="1.500" height="3.600" fill="#2a2d32"/><rect x="854.9" y="203.8" width="1.500" height="5" fill="#aeaca8"/><rect x="854.9" y="208.8" width="1.500" height="3.600" fill="#2a2d32"/><rect x="854.9" y="215" width="1.500" height="5" fill="#aeaca8"/><rect x="854.9" y="220" width="1.500" height="3.600" fill="#2a2d32"/><rect x="854.9" y="226.2" width="1.500" height="5" fill="#aeaca8"/><rect x="854.9" y="231.2" width="1.500" height="3.600" fill="#2a2d32"/><rect x="854.9" y="237.5" width="1.500" height="5" fill="#aeaca8"/><rect x="854.9" y="242.5" width="1.500" height="3.600" fill="#2a2d32"/><rect x="854.9" y="248.8" width="1.500" height="5" fill="#aeaca8"/><rect x="854.9" y="253.8" width="1.500" height="3.600" fill="#2a2d32"/><rect x="854.9" y="260" width="1.500" height="5" fill="#aeaca8"/><rect x="854.9" y="265" width="1.500" height="3.600" fill="#2a2d32"/><rect x="854.9" y="271.2" width="1.500" height="5" fill="#aeaca8"/><rect x="854.9" y="276.2" width="1.500" height="3.600" fill="#2a2d32"/><rect x="854.9" y="282.5" width="1.500" height="5" fill="#aeaca8"/><rect x="854.9" y="287.5" width="1.500" height="3.600" fill="#2a2d32"/><rect x="863.6" y="135.6" width="1.500" height="5" fill="#aeaca8"/><rect x="863.6" y="140.6" width="1.500" height="3.600" fill="#2a2d32"/><rect x="863.6" y="146.8" width="1.500" height="5" fill="#aeaca8"/><rect x="863.6" y="151.8" width="1.500" height="3.600" fill="#2a2d32"/><rect x="863.6" y="158.1" width="1.500" height="5" fill="#aeaca8"/><rect x="863.6" y="163.1" width="1.500" height="3.600" fill="#2a2d32"/><rect x="863.6" y="169.3" width="1.500" height="5" fill="#aeaca8"/><rect x="863.6" y="174.3" width="1.500" height="3.600" fill="#2a2d32"/><rect x="863.6" y="180.6" width="1.500" height="5" fill="#aeaca8"/><rect x="863.6" y="185.6" width="1.500" height="3.600" fill="#2a2d32"/><rect x="863.6" y="191.8" width="1.500" height="5" fill="#aeaca8"/><rect x="863.6" y="196.8" width="1.500" height="3.600" fill="#2a2d32"/><rect x="863.6" y="203.1" width="1.500" height="5" fill="#aeaca8"/><rect x="863.6" y="208.1" width="1.500" height="3.600" fill="#2a2d32"/><rect x="863.6" y="214.3" width="1.500" height="5" fill="#aeaca8"/><rect x="863.6" y="219.3" width="1.500" height="3.600" fill="#2a2d32"/><rect x="863.6" y="225.6" width="1.500" height="5" fill="#aeaca8"/><rect x="863.6" y="230.6" width="1.500" height="3.600" fill="#2a2d32"/><rect x="863.6" y="236.8" width="1.500" height="5" fill="#aeaca8"/><rect x="863.6" y="241.8" width="1.500" height="3.600" fill="#2a2d32"/><rect x="863.6" y="248.1" width="1.500" height="5" fill="#aeaca8"/><rect x="863.6" y="253.1" width="1.500" height="3.600" fill="#2a2d32"/><rect x="863.6" y="259.4" width="1.500" height="5" fill="#aeaca8"/><rect x="863.6" y="264.4" width="1.500" height="3.600" fill="#2a2d32"/><rect x="863.6" y="270.6" width="1.500" height="5" fill="#aeaca8"/><rect x="863.6" y="275.6" width="1.500" height="3.600" fill="#2a2d32"/><rect x="863.6" y="281.9" width="1.500" height="5" fill="#aeaca8"/><rect x="863.6" y="286.9" width="1.500" height="3.600" fill="#2a2d32"/><rect x="872.6" y="122.7" width="1.500" height="5" fill="#aeaca8"/><rect x="872.6" y="127.7" width="1.500" height="3.600" fill="#2a2d32"/><rect x="872.6" y="133.9" width="1.500" height="5" fill="#aeaca8"/><rect x="872.6" y="138.9" width="1.500" height="3.600" fill="#2a2d32"/><rect x="872.6" y="145.2" width="1.500" height="5" fill="#aeaca8"/><rect x="872.6" y="150.2" width="1.500" height="3.600" fill="#2a2d32"/><rect x="872.6" y="156.4" width="1.500" height="5" fill="#aeaca8"/><rect x="872.6" y="161.4" width="1.500" height="3.600" fill="#2a2d32"/><rect x="872.6" y="167.7" width="1.500" height="5" fill="#aeaca8"/><rect x="872.6" y="172.7" width="1.500" height="3.600" fill="#2a2d32"/><rect x="872.6" y="178.9" width="1.500" height="5" fill="#aeaca8"/><rect x="872.6" y="183.9" width="1.500" height="3.600" fill="#2a2d32"/><rect x="872.6" y="190.2" width="1.500" height="5" fill="#aeaca8"/><rect x="872.6" y="195.2" width="1.500" height="3.600" fill="#2a2d32"/><rect x="872.6" y="201.4" width="1.500" height="5" fill="#aeaca8"/><rect x="872.6" y="206.4" width="1.500" height="3.600" fill="#2a2d32"/><rect x="872.6" y="212.7" width="1.500" height="5" fill="#aeaca8"/><rect x="872.6" y="217.7" width="1.500" height="3.600" fill="#2a2d32"/><rect x="872.6" y="223.9" width="1.500" height="5" fill="#aeaca8"/><rect x="872.6" y="228.9" width="1.500" height="3.600" fill="#2a2d32"/><rect x="872.6" y="235.2" width="1.500" height="5" fill="#aeaca8"/><rect x="872.6" y="240.2" width="1.500" height="3.600" fill="#2a2d32"/><rect x="872.6" y="246.4" width="1.500" height="5" fill="#aeaca8"/><rect x="872.6" y="251.4" width="1.500" height="3.600" fill="#2a2d32"/><rect x="872.6" y="257.7" width="1.500" height="5" fill="#aeaca8"/><rect x="872.6" y="262.7" width="1.500" height="3.600" fill="#2a2d32"/><rect x="872.6" y="268.9" width="1.500" height="5" fill="#aeaca8"/><rect x="872.6" y="273.9" width="1.500" height="3.600" fill="#2a2d32"/><rect x="872.6" y="280.2" width="1.500" height="5" fill="#aeaca8"/><rect x="872.6" y="285.2" width="1.500" height="3.600" fill="#2a2d32"/>
<rect x="895.1" y="127.7" width="2.300" height="7" fill="#14181e"/><rect x="895.1" y="138.7" width="2.300" height="7" fill="#14181e"/><rect x="895.1" y="149.6" width="2.300" height="16.5" fill="#14181e"/><rect x="895.1" y="149.6" width="2.300" height="2.600" fill="#3b95bd"/><rect x="895.1" y="171.5" width="2.300" height="7" fill="#14181e"/><rect x="895.1" y="182.4" width="2.300" height="7" fill="#14181e"/><rect x="895.1" y="182.4" width="2.300" height="2.600" fill="#3b95bd"/><rect x="895.1" y="193.4" width="2.300" height="7" fill="#14181e"/><rect x="895.1" y="204.3" width="2.300" height="7" fill="#14181e"/><rect x="895.1" y="215.3" width="2.300" height="7" fill="#14181e"/><rect x="895.1" y="219.7" width="2.300" height="2.600" fill="#3b95bd"/><rect x="895.1" y="226.2" width="2.300" height="16.5" fill="#14181e"/><rect x="895.1" y="248.1" width="2.300" height="7" fill="#14181e"/><rect x="895.1" y="259.1" width="2.300" height="16.5" fill="#14181e"/><rect x="895.1" y="259.1" width="2.300" height="2.600" fill="#3b95bd"/><rect x="895.1" y="281" width="2.300" height="16.5" fill="#14181e"/><rect x="904.4" y="132.5" width="2.300" height="7" fill="#14181e"/><rect x="904.4" y="132.5" width="2.300" height="2.600" fill="#3b95bd"/><rect x="904.4" y="143.4" width="2.300" height="7" fill="#14181e"/><rect x="904.4" y="154.4" width="2.300" height="16.5" fill="#14181e"/><rect x="904.4" y="176.3" width="2.300" height="7" fill="#14181e"/><rect x="904.4" y="187.2" width="2.300" height="16.5" fill="#14181e"/><rect x="904.4" y="209.1" width="2.300" height="7" fill="#14181e"/><rect x="904.4" y="220.1" width="2.300" height="7" fill="#14181e"/><rect x="904.4" y="220.1" width="2.300" height="2.600" fill="#3b95bd"/><rect x="904.4" y="231" width="2.300" height="16.5" fill="#14181e"/><rect x="904.4" y="244.9" width="2.300" height="2.600" fill="#3b95bd"/><rect x="904.4" y="252.9" width="2.300" height="7" fill="#14181e"/><rect x="904.4" y="263.9" width="2.300" height="7" fill="#14181e"/><rect x="904.4" y="274.8" width="2.300" height="7" fill="#14181e"/><rect x="904.4" y="279.2" width="2.300" height="2.600" fill="#3b95bd"/><rect x="904.4" y="285.8" width="2.300" height="7" fill="#14181e"/><rect x="904.4" y="290.2" width="2.300" height="2.600" fill="#3b95bd"/><rect x="913.3" y="137.3" width="2.300" height="7" fill="#14181e"/><rect x="913.3" y="137.3" width="2.300" height="2.600" fill="#3b95bd"/><rect x="913.3" y="148.2" width="2.300" height="16.5" fill="#14181e"/><rect x="913.3" y="148.2" width="2.300" height="2.600" fill="#3b95bd"/><rect x="913.3" y="170.2" width="2.300" height="7" fill="#14181e"/><rect x="913.3" y="181.1" width="2.300" height="16.5" fill="#14181e"/><rect x="913.3" y="181.1" width="2.300" height="2.600" fill="#3b95bd"/><rect x="913.3" y="203" width="2.300" height="7" fill="#14181e"/><rect x="913.3" y="203" width="2.300" height="2.600" fill="#3b95bd"/><rect x="913.3" y="213.9" width="2.300" height="16.5" fill="#14181e"/><rect x="913.3" y="235.8" width="2.300" height="7" fill="#14181e"/><rect x="913.3" y="235.8" width="2.300" height="2.600" fill="#3b95bd"/><rect x="913.3" y="246.8" width="2.300" height="7" fill="#14181e"/><rect x="913.3" y="257.8" width="2.300" height="7" fill="#14181e"/><rect x="913.3" y="257.8" width="2.300" height="2.600" fill="#3b95bd"/><rect x="913.3" y="268.7" width="2.300" height="7" fill="#14181e"/><rect x="913.3" y="268.7" width="2.300" height="2.600" fill="#3b95bd"/><rect x="913.3" y="279.6" width="2.300" height="7" fill="#14181e"/><rect x="956.2" y="166" width="2.300" height="7" fill="#14181e"/><rect x="956.2" y="176.9" width="2.300" height="7" fill="#14181e"/><rect x="956.2" y="181.3" width="2.300" height="2.600" fill="#3b95bd"/><rect x="956.2" y="187.9" width="2.300" height="7" fill="#14181e"/><rect x="956.2" y="187.9" width="2.300" height="2.600" fill="#3b95bd"/><rect x="956.2" y="198.8" width="2.300" height="7" fill="#14181e"/><rect x="956.2" y="198.8" width="2.300" height="2.600" fill="#3b95bd"/><rect x="956.2" y="209.8" width="2.300" height="7" fill="#14181e"/><rect x="956.2" y="214.2" width="2.300" height="2.600" fill="#3b95bd"/><rect x="956.2" y="220.7" width="2.300" height="7" fill="#14181e"/><rect x="956.2" y="231.7" width="2.300" height="7" fill="#14181e"/><rect x="956.2" y="231.7" width="2.300" height="2.600" fill="#3b95bd"/><rect x="956.2" y="242.6" width="2.300" height="7" fill="#14181e"/><rect x="956.2" y="253.6" width="2.300" height="7" fill="#14181e"/><rect x="956.2" y="258" width="2.300" height="2.600" fill="#3b95bd"/><rect x="956.2" y="264.5" width="2.300" height="7" fill="#14181e"/><rect x="956.2" y="275.5" width="2.300" height="16.5" fill="#14181e"/><rect x="956.2" y="289.4" width="2.300" height="2.600" fill="#3b95bd"/>
<path d="M879.300 98.300V288" stroke="#3a3b3f" stroke-width=".6"/>
<text transform="translate(891.200 173) rotate(-90)" font-family="Liberation Sans,sans-serif" font-weight="bold" font-style="italic" font-size="5.800" fill="#e4e6e8" letter-spacing=".2">MOTEL</text><text transform="translate(891.200 132.500) rotate(-90)" font-family="Liberation Sans,sans-serif" font-weight="bold" font-style="italic" font-size="5.800" fill="#e4e6e8" letter-spacing=".2">ONE</text>
<circle cx="886.300" cy="139.500" r="4.800" fill="#3f5560" stroke="#25a5d4" stroke-width="1.700"/><path d="M884.800 142.500L888 136.500" stroke="#25a5d4" stroke-width="1.200"/>
<path d="M958.700 130.300L996.400 98.700V90H1004V288H958.700Z" fill="#c6a07b"/><path d="M958.700 130.300L996.400 98.700V90H1004V288H958.700Z" fill="url(#sp)"/>
<path d="M997 99V84H1004V124L997 127Z" fill="#48494b"/><path d="M987.700 110.500L997 99.400V118L987.700 124Z" fill="#8d8f94"/><path d="M958.700 130.300L996.400 98.700" stroke="#e6e0d8" stroke-width=".8"/>
<path d="M972.1 129.2L1004 111.8V126L972.1 140.5Z" fill="#17212b"/><path d="M980.1 124.8V136.9" stroke="#8a7a68" stroke-width=".7"/><path d="M988 120.5V133.2" stroke="#8a7a68" stroke-width=".7"/><path d="M996 116.1V129.6" stroke="#8a7a68" stroke-width=".7"/><path d="M972.1 151L1004 132.5V147.7L972.1 163Z" fill="#17212b"/><path d="M980.1 146.4V159.2" stroke="#8a7a68" stroke-width=".7"/><path d="M988 141.8V155.3" stroke="#8a7a68" stroke-width=".7"/><path d="M996 137.1V151.5" stroke="#8a7a68" stroke-width=".7"/><path d="M972.1 173.9L1004 156.4V171.7L972.1 185.5Z" fill="#1b2631"/><path d="M980.1 169.5V182.1" stroke="#8a7a68" stroke-width=".7"/><path d="M988 165.2V178.6" stroke="#8a7a68" stroke-width=".7"/><path d="M996 160.8V175.1" stroke="#8a7a68" stroke-width=".7"/><path d="M972.1 197.4L1004 183.3V200.7L972.1 209.8Z" fill="#1f2c38"/><path d="M980.1 193.9V207.5" stroke="#8a7a68" stroke-width=".7"/><path d="M988 190.4V205.2" stroke="#8a7a68" stroke-width=".7"/><path d="M996 186.8V203" stroke="#8a7a68" stroke-width=".7"/><path d="M972.1 220.3L1004 208.3V224.7L972.1 232.3Z" fill="#25333f"/><path d="M980.1 217.3V230.4" stroke="#8a7a68" stroke-width=".7"/><path d="M988 214.3V228.5" stroke="#8a7a68" stroke-width=".7"/><path d="M996 211.3V226.6" stroke="#8a7a68" stroke-width=".7"/><path d="M972.1 243.2L1004 233.4V247.5L972.1 255.2Z" fill="#3a4a58"/><path d="M980.1 240.8V253.3" stroke="#8a7a68" stroke-width=".7"/><path d="M988 238.3V251.3" stroke="#8a7a68" stroke-width=".7"/><path d="M996 235.8V249.4" stroke="#8a7a68" stroke-width=".7"/>
<path d="M972.100 257L1004 249.500V256L972.100 262.500Z" fill="#6c6b6a"/><path d="M972.100 262.500L1004 256V272H972.100Z" fill="#2b2a28"/>
<path d="M917.600 216L959 192.300V288H917.600Z" fill="#d6b68f"/><path d="M917.600 216L959 192.300V288H917.600Z" fill="url(#sp)" opacity=".6"/>
<path d="M935 209.4L958.600 198.5V207.2L935 218.1Z" fill="#2c3844"/><path d="M939.7 207.2V215.9" stroke="#9aa2a8" stroke-width=".5"/><path d="M944.4 205V213.7" stroke="#9aa2a8" stroke-width=".5"/><path d="M949.2 202.9V211.6" stroke="#9aa2a8" stroke-width=".5"/><path d="M951 201.8L953.400 200.7V209.4L951 210.5Z" fill="#d9d4cc"/><path d="M935 224.7L958.600 214.9V223.6L935 233.4Z" fill="#2c3844"/><path d="M939.7 222.7V231.4" stroke="#9aa2a8" stroke-width=".5"/><path d="M944.4 220.8V229.5" stroke="#9aa2a8" stroke-width=".5"/><path d="M949.2 218.8V227.5" stroke="#9aa2a8" stroke-width=".5"/><path d="M951 217.8L953.400 216.9V225.6L951 226.5Z" fill="#d9d4cc"/><path d="M935 239.9L958.600 231.2V239.9L935 247.5Z" fill="#2c3844"/><path d="M939.7 238.2V246" stroke="#9aa2a8" stroke-width=".5"/><path d="M944.4 236.4V244.5" stroke="#9aa2a8" stroke-width=".5"/><path d="M949.2 234.7V242.9" stroke="#9aa2a8" stroke-width=".5"/><path d="M951 233.8L953.400 232.9V241.4L951 242.2Z" fill="#d9d4cc"/><path d="M935 254L958.600 246.4V255.2L935 261.7Z" fill="#2c3844"/><path d="M939.7 252.5V260.4" stroke="#9aa2a8" stroke-width=".5"/><path d="M944.4 251V259.1" stroke="#9aa2a8" stroke-width=".5"/><path d="M949.2 249.4V257.8" stroke="#9aa2a8" stroke-width=".5"/><path d="M951 248.7L953.400 247.9V256.5L951 257.2Z" fill="#d9d4cc"/><path d="M935 268.5L958.600 262V270L935 275.5Z" fill="#2c3844"/><path d="M939.7 267.2V274.4" stroke="#9aa2a8" stroke-width=".5"/><path d="M944.4 265.9V273.3" stroke="#9aa2a8" stroke-width=".5"/><path d="M949.2 264.6V272.2" stroke="#9aa2a8" stroke-width=".5"/><path d="M951 264L953.400 263.3V271.1L951 271.7Z" fill="#d9d4cc"/><rect x="920.1" y="221.4" width="2.400" height="5.200" fill="#56626c"/><rect x="920.6" y="222" width="1.400" height="4" fill="#a7b4bf"/><rect x="920.1" y="232.3" width="2.400" height="5.200" fill="#56626c"/><rect x="920.6" y="232.9" width="1.400" height="4" fill="#a7b4bf"/><rect x="920.1" y="243.2" width="2.400" height="5.200" fill="#56626c"/><rect x="920.6" y="243.8" width="1.400" height="4" fill="#a7b4bf"/><rect x="920.1" y="254.1" width="2.400" height="5.200" fill="#56626c"/><rect x="920.6" y="254.7" width="1.400" height="4" fill="#a7b4bf"/><rect x="920.1" y="265" width="2.400" height="5.200" fill="#56626c"/><rect x="920.6" y="265.6" width="1.400" height="4" fill="#a7b4bf"/><rect x="920.1" y="275.9" width="2.400" height="5.200" fill="#56626c"/><rect x="920.6" y="276.5" width="1.400" height="4" fill="#a7b4bf"/><rect x="920.1" y="286.8" width="2.400" height="5.200" fill="#56626c"/><rect x="920.6" y="287.4" width="1.400" height="4" fill="#a7b4bf"/><rect x="928.4" y="217" width="2.400" height="5.200" fill="#56626c"/><rect x="928.9" y="217.6" width="1.400" height="4" fill="#a7b4bf"/><rect x="928.4" y="227.9" width="2.400" height="5.200" fill="#56626c"/><rect x="928.9" y="228.5" width="1.400" height="4" fill="#a7b4bf"/><rect x="928.4" y="238.8" width="2.400" height="5.200" fill="#56626c"/><rect x="928.9" y="239.4" width="1.400" height="4" fill="#a7b4bf"/><rect x="928.4" y="249.7" width="2.400" height="5.200" fill="#56626c"/><rect x="928.9" y="250.3" width="1.400" height="4" fill="#a7b4bf"/><rect x="928.4" y="260.6" width="2.400" height="5.200" fill="#56626c"/><rect x="928.9" y="261.2" width="1.400" height="4" fill="#a7b4bf"/><rect x="928.4" y="271.5" width="2.400" height="5.200" fill="#56626c"/><rect x="928.9" y="272.1" width="1.400" height="4" fill="#a7b4bf"/><rect x="928.4" y="282.4" width="2.400" height="5.200" fill="#56626c"/><rect x="928.9" y="283" width="1.400" height="4" fill="#a7b4bf"/>
<path d="M917.600 216V288" stroke="#e8d6c0" stroke-width=".6"/>
<path d="M919 288L921 278L926 276L929 268L935 270L938 262L946 265L950 256L957 259L962 252L969 256L974 262L982 260L988 268L996 272L1000 282V288Z" fill="#1e2c1b" fill-opacity=".85"/><path d="M930 288L934 280L942 278L948 270L958 274L964 266L972 272L980 270L986 280L994 284V288Z" fill="#33492a" fill-opacity=".8"/>
</svg>
</div></div>
<div class="p" id="p5" style="left:8px;top:165px;width:499px;height:123px"><div class="w" style="left:0.00px;top:0.00px;width:497.19px;height:121.59px"><div class="h" style="letter-spacing:0.44px"><i>B</i>enutzeraufgaben</div><div style="position:absolute;left:2.400px;top:13.500px;font-weight:bold;color:#e6202a;font-size:7px;line-height:11px">Überfällig</div><div class="sep" style="top:31.400px;width:478px"></div><div style="position:absolute;left:.600px;top:39.200px;width:477.400px;height:90px;border:1px solid #e9e9e9;border-left:2px solid #dcdcdc"></div><div class="cb" style="top:47.4px"></div><div class="ti" style="top:45.8px"><a>Materialgüte prüfen</a></div><div class="dt" style="top:57.0px">11.01.2017</div><div class="cb" style="top:81.4px"></div><div class="ti" style="top:79.8px"><a>Abschlagsrechnung vorbereiten</a></div><div class="dt" style="top:91.0px">16.01.2017</div><div class="cb" style="top:115.4px"></div><div class="ti" style="top:113.8px"><a>Durchdringung für Klimagerät</a></div><div class="dt" style="top:125.0px">18.01.2017</div><div class="sep" style="top:73.400px;left:2.600px;width:474px"></div><div class="sep" style="top:107.600px;left:2.600px;width:474px"></div><div style="position:absolute;left:478px;top:15.100px;width:8.900px;height:110px;background:#f1f1f1"><div style="position:absolute;left:1px;top:9.100px;width:6.900px;height:87.800px;background:#c1c1c1"></div><div style="position:absolute;left:2.400px;top:3.600px;width:0;height:0;border-left:2px solid transparent;border-right:2px solid transparent;border-bottom:2.200px solid #8a8a8a"></div></div></div></div>
<div class="p" id="p6" style="left:8px;top:290px;width:749px;height:123px"><div class="w" style="left:0.00px;top:1.00px;width:747.59px;height:120.39px"><div class="h" style="letter-spacing:0.35px"><i>A</i>dressen</div><div class="ln" style="left:4.200px;width:744px;top:19.1px"></div><div class="ln" style="left:4.200px;width:744px;top:35.1px;height:1.100px;background:#d6d6d6"></div><div class="ln" style="left:4.200px;width:744px;top:51.3px"></div><span class="c th" style="left:4.6px;top:22.4px">Nachname</span><span class="c th" style="left:65.9px;top:22.4px">Vorname</span><span class="c th" style="left:119.2px;top:22.4px">Name1</span><span class="c th" style="left:232.0px;top:22.4px">Name2</span><span class="c th" style="left:275.2px;top:22.4px">Straße</span><span class="c th" style="left:366.2px;top:22.4px">PLZ</span><span class="c th" style="left:403.2px;top:22.4px">Ort</span><span class="c th" style="left:461.7px;top:22.4px">Telefon</span><span class="c th" style="left:547.2px;top:22.4px">Mobil</span><span class="c th" style="left:584.0px;top:22.4px">Email</span><span class="c" style="left:4.6px;top:38.9px">Siebert</span><span class="c" style="left:119.2px;top:38.9px">Ingenieurbüro Siebert</span><span class="c" style="left:275.2px;top:38.9px">Gewerbestr. 7</span><span class="c" style="left:366.2px;top:38.9px">20000</span><span class="c" style="left:403.2px;top:38.9px">Hamburg</span><span class="c" style="left:461.7px;top:38.9px"><a>040 - 44444444</a></span><span class="c" style="left:584.0px;top:38.9px"><a>siebert@ing-siebert.de</a></span><span class="c" style="left:4.6px;top:54.6px">Schmidt</span><span class="c" style="left:119.2px;top:54.6px">Baudezernat VII</span><span class="c" style="left:275.2px;top:54.6px">Tiergartenstr. 454</span><span class="c" style="left:366.2px;top:54.6px">40000</span><span class="c" style="left:403.2px;top:54.6px">Düsseldorf</span><span class="c" style="left:461.7px;top:54.6px"><a>0211 - 999999 0</a></span><span class="c" style="left:584.0px;top:54.6px"><a>w.schmidt@stadt-duesseldorf.de</a></span></div></div>
<div class="p" id="p7" style="left:759px;top:290px;width:249px;height:215px"><div class="w" style="left:1.19px;top:1.00px;width:245.59px;height:212.00px"><div class="h" style="margin-left:-.8px;letter-spacing:0.35px"><i>S</i>tatuswerte</div><div class="r" style="top:14.6px;left:1.800px;right:3.400px;margin-top:0">Auftragssumme:<b>9.651,40 €</b></div><div class="r" style="top:25.8px;left:1.800px;right:3.400px;margin-top:0">Fertigstellungsstand:<b>0,00 €</b></div><div class="r" style="top:37.0px;left:1.800px;right:3.400px;margin-top:0">Offener Auftragswert:<b>9.651,40 €</b></div><div class="r" style="top:63.8px;left:1.800px;right:3.400px;margin-top:0">Fertigstellungsstand:<b>0,00 €</b></div><div class="r" style="top:75.0px;left:1.800px;right:3.400px;margin-top:0">Prognose restliche Auftragsl.:<b>0,00 €</b></div><div class="r" style="top:86.2px;left:1.800px;right:3.400px;margin-top:0">Selbstkosten:<b>3.443,27 €</b></div><div class="r" style="top:97.4px;left:1.800px;right:3.400px;margin-top:0">Prognose restliche Kosten:<b>0,00 €</b></div><div class="r" style="top:108.6px;left:1.800px;right:3.400px;margin-top:0">Gewinn ohne Berücks. nicht<b>-3.443,27 €</b></div><div class="r" style="top:119.8px;left:1.800px;right:3.400px;margin-top:0">abger. Bestellungen:<b></b></div><div class="r" style="top:131.0px;left:1.800px;right:3.400px;margin-top:0">Noch nicht abger. Bestellungen<b>16.355,76 €</b></div><div class="r" style="top:142.2px;left:1.800px;right:3.400px;margin-top:0">ohne Gemeinkosten:<b></b></div><div class="r" style="top:153.4px;left:1.800px;right:3.400px;margin-top:0">Gewinn unter Berücks. nicht<b>-19.799,03 €</b></div><div class="r" style="top:164.6px;left:1.800px;right:3.400px;margin-top:0">abger. Bestellungen:<b></b></div><div class="ln" style="left:1.800px;width:240.800px;top:55.2px"></div></div></div>
<div class="p" id="p8" style="left:8px;top:416px;width:373px;height:90px"><div class="w" style="left:0.00px;top:-1.00px;width:371.59px;height:78.00px"><div class="h" style="margin-top:1.100px;letter-spacing:0.65px"><i>K</i>alkulation</div><div class="h hr" style="margin-top:1.100px;letter-spacing:0.55px;right:6.45px"><i>A</i>nzeigen</div><span class="c" style="left:15.4px;top:22.7px;color:#5a5a5a;font-size:7.150px">Pos. 6.3.020 (10 Stück) Türelement sdsdsdsds</span><span class="c" style="left:15.4px;top:36.9px;color:#5a5a5a;font-size:7.150px">Pos. 6.3.030 (5 Stück) Türelement 5050mm x 2500mm</span><span class="c" style="left:15.4px;top:51.2px;color:#5a5a5a;font-size:7.150px">Pos. 6.3.050 (3 Stück) Türelement 4990mm x 2500mm</span><span class="c" style="left:15.4px;top:65.5px;color:#5a5a5a;font-size:7.150px">Pos. 06.03.090 (20 Stück) Fensterelement 990mm x 1185mm</span></div></div>
<div class="p" id="p9" style="left:384px;top:416px;width:373px;height:90px"><div class="w" style="left:0.59px;top:-1.00px;width:371.00px;height:78.00px"><div class="h" style="margin-top:1.100px;letter-spacing:0.44px"><i>A</i>ngebote</div><div class="h hr" style="margin-top:1.100px;letter-spacing:0.06px;right:6.94px"><i>E</i>rstellen</div><div class="ln" style="left:1.800px;width:372px;top:20.9px"></div><div class="ln" style="left:1.800px;width:372px;top:52.9px"></div><div class="ln" style="left:1.800px;width:372px;top:68.9px"></div><div class="ln" style="left:1.800px;width:372px;top:36.4px;height:1.100px;background:#d6d6d6"></div><span class="c th" style="left:4.1px;top:23.5px">Typ</span><span class="c th" style="left:53.0px;top:23.5px">Angebot-Nr</span><span class="c th" style="left:121.3px;top:23.5px">Datum</span><span class="c th" style="left:161.6px;top:23.5px">Sachbearbeiter</span><span class="c th" style="left:219.0px;top:23.5px">Gewerk</span><span class="c th" style="left:250.2px;top:23.5px">Angebotstatus</span><span class="c th" style="left:306.1px;top:23.5px">Angebotssumme</span><span class="c th" style="left:369.4px;top:23.5px">Info</span><span class="c" style="left:4.1px;top:39.9px">Basisangebot</span><span class="c" style="left:57.3px;top:39.9px;font-weight:bold;color:#2a5699">AP-100</span><span class="c" style="left:121.3px;top:39.9px">17.02.2020</span><span class="c" style="left:250.2px;top:39.9px">Offen</span><span class="c" style="left:306.1px;top:39.9px;width:58.500px;text-align:right">0,00 €</span><span class="c" style="left:4.1px;top:56.0px">Basisangebot</span><span class="c" style="left:57.3px;top:56.0px;font-weight:bold;color:#2a5699">AP-100</span><span class="c" style="left:121.3px;top:56.0px">17.02.2020</span><span class="c" style="left:250.2px;top:56.0px">Offen</span><span class="c" style="left:306.1px;top:56.0px;width:58.500px;text-align:right">0,00 €</span><span class="c" style="left:4.1px;top:72.1px">Basisangebot</span><span class="c" style="left:57.3px;top:72.1px;font-weight:bold;color:#2a5699">AP-100</span><span class="c" style="left:121.3px;top:72.1px">17.02.2020</span><span class="c" style="left:250.2px;top:72.1px">Offen</span><span class="c" style="left:306.1px;top:72.1px;width:58.500px;text-align:right">0,00 €</span></div></div>
<div id="cut" style="position:absolute;left:0;top:491.8px;width:1024px;height:14px;background:#fff"></div>
<div id="sb" style="position:absolute;left:1010.2px;top:37px;width:8.8px;height:454.8px;background:#f1f1f1"><div style="position:absolute;left:2.300px;top:3.500px;width:0;height:0;border-left:2.100px solid transparent;border-right:2.100px solid transparent;border-bottom:2.300px solid #8a8a8a"></div><div style="position:absolute;left:2.300px;top:448.500px;width:0;height:0;border-left:2.100px solid transparent;border-right:2.100px solid transparent;border-top:2.300px solid #505050"></div><div style="position:absolute;left:1px;top:9.2px;width:6.8px;height:112.6px;background:#c1c1c1"></div></div>
</body></html>
